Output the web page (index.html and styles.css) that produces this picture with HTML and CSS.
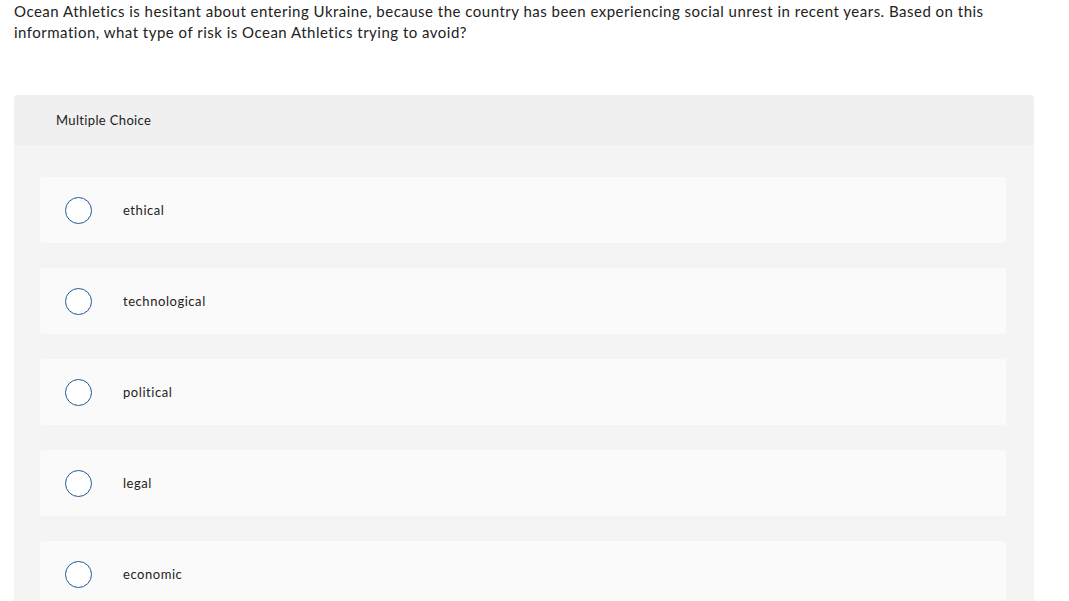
FILE: index.html
```html
<!DOCTYPE html>
<html>
<head>
<meta charset="utf-8">
<link rel="stylesheet" href="styles.css">
</head>
<body>
<div class="page">
  <p class="question">Ocean Athletics is hesitant about entering Ukraine, because the country has been experiencing social unrest in recent years. Based on this information, what type of risk is Ocean Athletics trying to avoid?</p>
  <div class="mc">
    <div class="mc-header">Multiple Choice</div>
    <div class="mc-body">
      <div class="option"><span class="radio"></span><span class="label">ethical</span></div>
      <div class="option"><span class="radio"></span><span class="label">technological</span></div>
      <div class="option"><span class="radio"></span><span class="label">political</span></div>
      <div class="option"><span class="radio"></span><span class="label">legal</span></div>
      <div class="option"><span class="radio"></span><span class="label">economic</span></div>
    </div>
  </div>
</div>
</body>
</html>
```

FILE: styles.css
```css
html, body {
  margin: 0;
  padding: 0;
  background: #ffffff;
}
body {
  font-family: Lato, "Open Sans", "Liberation Sans", sans-serif;
  color: #222222;
}
.page {
  padding: 1px 35px 0 14px;
}
.question {
  margin: 0;
  font-size: 15px;
  line-height: 21px;
  letter-spacing: 0.49px;
  color: #222222;
  max-width: 990px;
}
.mc {
  margin-top: 52px;
  width: 1020px;
  background: #f4f4f4;
  border-radius: 3px 3px 0 0;
  overflow: hidden;
}
.mc-header {
  height: 50px;
  background: #f0f0f0;
  padding-left: 42px;
  display: flex;
  align-items: center;
  font-size: 13px;
  letter-spacing: 0.35px;
  color: #222222;
}
.mc-body {
  padding: 32px 28px 25px 26px;
  display: flex;
  flex-direction: column;
  gap: 25px;
}
.option {
  height: 66px;
  background: #fafafa;
  border-radius: 3px;
  display: flex;
  align-items: center;
  padding-left: 25px;
}
.radio {
  width: 25px;
  height: 25px;
  border: 1.5px solid #1f5a94;
  border-radius: 50%;
  background: #ffffff;
  flex: none;
}
.label {
  margin-left: 31px;
  font-size: 13px;
  letter-spacing: 0.55px;
  color: #222222;
}
```
